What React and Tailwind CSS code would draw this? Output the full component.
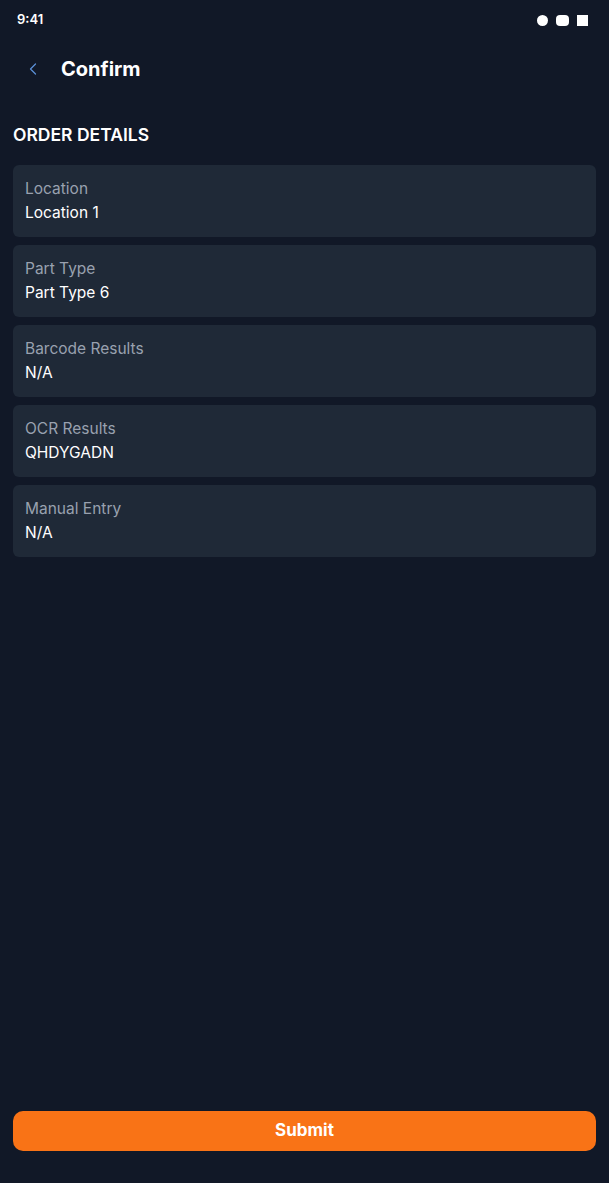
import { ChevronLeft } from 'lucide-react';

const details = [
  { label: 'Location', value: 'Location 1' },
  { label: 'Part Type', value: 'Part Type 6' },
  { label: 'Barcode Results', value: 'N/A' },
  { label: 'OCR Results', value: 'QHDYGADN' },
  { label: 'Manual Entry', value: 'N/A' },
];

function StatusBar() {
  return (
    <div className="flex h-10 items-center justify-between pl-[17px] pr-[21px]">
      <span className="text-[13px] font-semibold text-white">9:41</span>
      <div className="flex items-center gap-[8px]">
        <div className="h-[11px] w-[11px] rounded-full bg-white" />
        <div className="h-[11px] w-[13px] rounded-[4px] bg-white" />
        <div className="h-[11px] w-[11px] bg-white" />
      </div>
    </div>
  );
}

export default function App() {
  return (
    <div
      className="flex h-[1183px] flex-col bg-[#111827] text-white"
      style={{ fontFamily: 'Inter, "Liberation Sans", sans-serif' }}
    >
      <StatusBar />

      <header className="flex h-[58px] items-center pl-[21px]">
        <button className="flex h-6 w-6 items-center justify-center text-[#5b8fd6]">
          <ChevronLeft size={20} strokeWidth={1.5} />
        </button>
        <h1 className="ml-4 text-[20px] font-bold">Confirm</h1>
      </header>

      <main className="flex-1 px-[13px] pt-[24px]">
        <h2 className="text-[17.5px] font-semibold">ORDER DETAILS</h2>
        <div className="mt-[17px] flex flex-col gap-2">
          {details.map((item) => (
            <div key={item.label} className="flex h-[72px] flex-col justify-center rounded-md bg-[#1f2937] px-3">
              <p className="text-[15.5px] leading-6 text-gray-400">{item.label}</p>
              <p className="text-[15.5px] font-normal leading-6 text-white">{item.value}</p>
            </div>
          ))}
        </div>
      </main>

      <div className="px-[13px] pb-8">
        <button className="h-10 w-full rounded-[10px] bg-[#f97316] text-[17px] font-bold text-white">
          Submit
        </button>
      </div>
    </div>
  );
}
